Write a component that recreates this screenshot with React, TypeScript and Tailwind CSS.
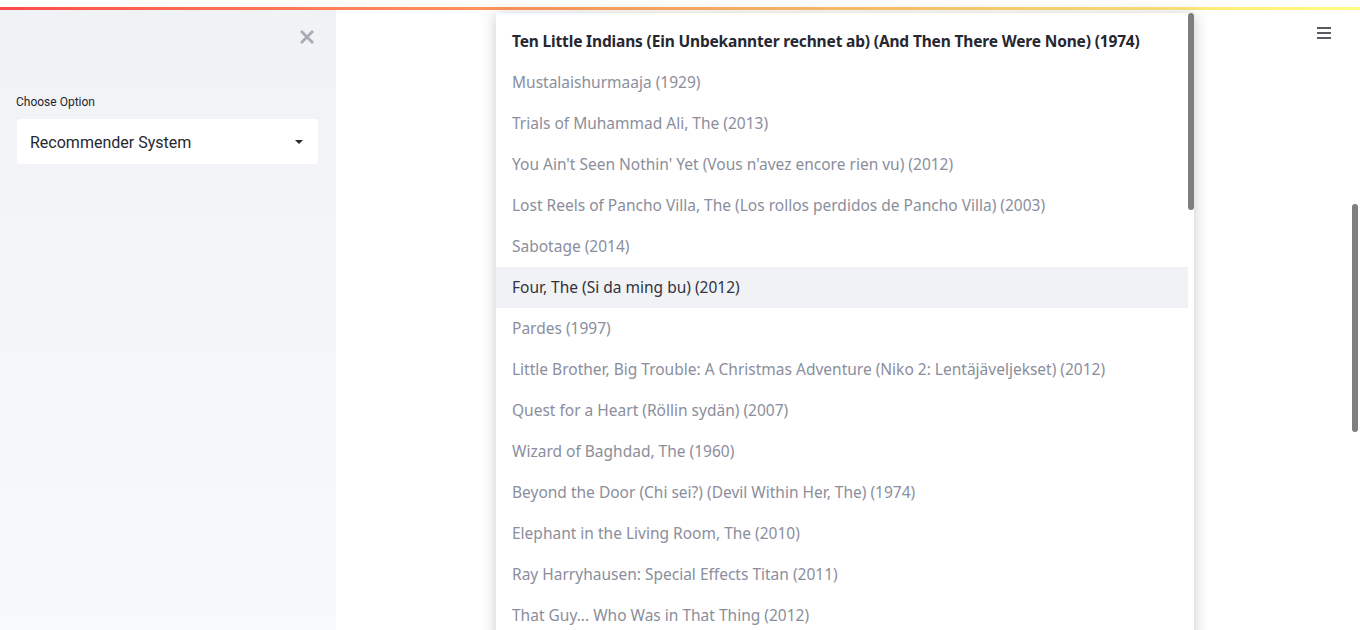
const movies = [
  'Ten Little Indians (Ein Unbekannter rechnet ab) (And Then There Were None) (1974)',
  'Mustalaishurmaaja (1929)',
  'Trials of Muhammad Ali, The (2013)',
  "You Ain't Seen Nothin' Yet (Vous n'avez encore rien vu) (2012)",
  'Lost Reels of Pancho Villa, The (Los rollos perdidos de Pancho Villa) (2003)',
  'Sabotage (2014)',
  'Four, The (Si da ming bu) (2012)',
  'Pardes (1997)',
  'Little Brother, Big Trouble: A Christmas Adventure (Niko 2: Lentäjäveljekset) (2012)',
  'Quest for a Heart (Röllin sydän) (2007)',
  'Wizard of Baghdad, The (1960)',
  'Beyond the Door (Chi sei?) (Devil Within Her, The) (1974)',
  'Elephant in the Living Room, The (2010)',
  'Ray Harryhausen: Special Effects Titan (2011)',
  'That Guy... Who Was in That Thing (2012)',
];

const App = () => {
  return (
    <div className="h-[630px] overflow-hidden bg-white flex flex-col" style={{ fontFamily: '"Noto Sans", sans-serif' }}>
      <div className="h-[7px] shrink-0 bg-white" />
      <div className="h-[3px] shrink-0 bg-gradient-to-r from-[#ff4b4b] to-[#fffd80]" />
      <div className="flex flex-1 relative">
        {/* sidebar */}
        <aside className="w-[336px] shrink-0 bg-gradient-to-b from-[#f0f2f6] to-[#f8f9fb] px-4 pt-[20px]" style={{ fontFamily: 'Roboto, sans-serif' }}>
          <div className="flex justify-end pr-[6px]">
            <svg width="14" height="14" viewBox="0 0 14 14" className="text-[#a8abb3]">
              <path d="M2 2 L12 12 M12 2 L2 12" stroke="currentColor" strokeWidth="2.8" strokeLinecap="square" />
            </svg>
          </div>
          <div className="mt-[49px] text-[12px] text-[#262730]">Choose Option</div>
          <div className="mt-[8px] ml-px w-[301px] h-[45px] bg-white rounded-[3px] flex items-center justify-between pl-[13px] pr-[14px]">
            <span className="text-[16px] text-[#262730] pt-[2px]">Recommender System</span>
            <svg width="10" height="6" viewBox="0 0 10 6" className="text-[#262730]">
              <path d="M1 1 L5 5 L9 1 Z" fill="currentColor" />
            </svg>
          </div>
        </aside>

        {/* main */}
        <main className="flex-1 relative">
          <div className="absolute right-[29px] top-[17px] text-[#262730]">
            <svg width="14" height="12" viewBox="0 0 14 12">
              <path d="M0 1 H14 M0 6 H14 M0 11 H14" stroke="currentColor" strokeWidth="1.6" />
            </svg>
          </div>
          <div className="absolute right-[2px] top-[194px] w-[6px] h-[228px] rounded-full bg-[#7f7f7f]" />
        </main>

        {/* dropdown popup */}
        <div className="absolute left-[496px] top-[3px] w-[698px] h-[700px] bg-white shadow-[0_2px_14px_rgba(0,0,0,0.22)] flex">
          <ul className="flex-1 pt-[8px] text-[15.5px]">
            {movies.map((m, i) => (
              <li
                key={m}
                className={
                  'h-[41px] flex items-center pl-4 whitespace-nowrap ' +
                  (i === 0
                    ? 'font-bold tracking-[-0.16px] text-[#262730]'
                    : i === 6
                      ? 'bg-[#f0f2f6] text-[#31333f]'
                      : 'text-[#8b8e9c]')
                }
              >
                {m}
              </li>
            ))}
          </ul>
          <div className="w-[6px]">
            <div className="h-[197px] rounded-full bg-[#7f7f7f]" />
          </div>
        </div>
      </div>
    </div>
  );
};

export default App;
